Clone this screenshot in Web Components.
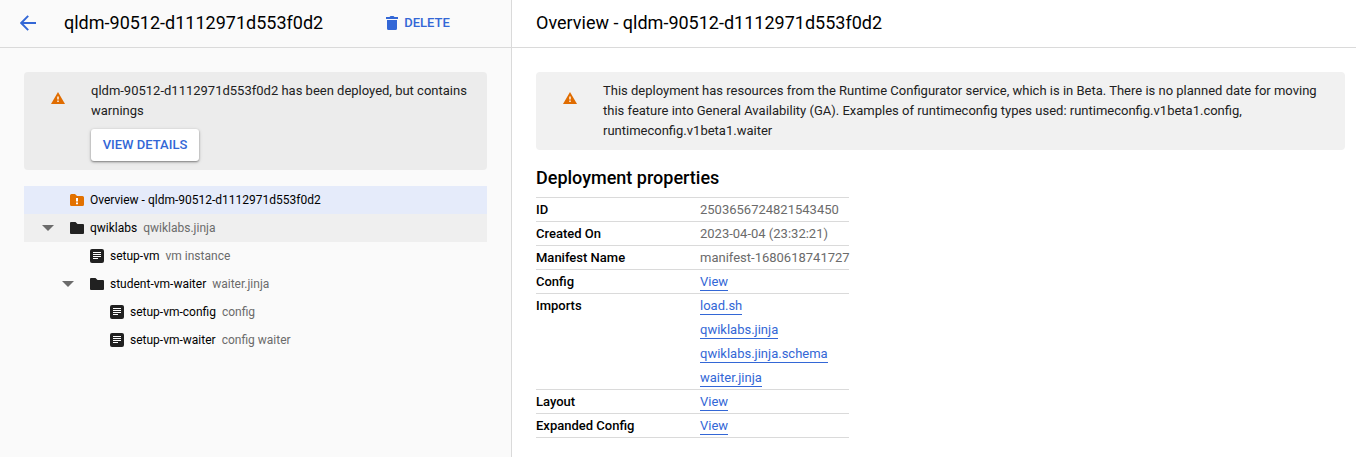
<!DOCTYPE html>
<html lang="en">
<head>
<meta charset="utf-8">
<title>Deployment details</title>
<style>
  html, body { height: 100%; }
  body {
    margin: 0;
    font: 13px/20px Roboto, "Liberation Sans", sans-serif;
    color: #212121;
    background: #fff;
    --link: #3367d6;
    --line: #dadada;
    --muted: #6b6b6b;
    --warn: #e06c00;
  }
</style>
</head>
<body>
<deployment-app></deployment-app>
<script>
const define = (name, html) => {
  const template = document.createElement('template');
  template.innerHTML = html;
  customElements.define(name, class extends HTMLElement {
    constructor() {
      super();
      this.attachShadow({ mode: 'open' }).append(template.content.cloneNode(true));
    }
    connectedCallback() {
      if (name === 'tree-item') setupTreeItem(this);
    }
  });
};

const treeIcons = {
  warning: '<path fill="#e27100" d="M1.500 1H5l2 2h5.500q1.500 0 1.500 1.500v7q0 1.500-1.500 1.500h-11Q0 13 0 11.500v-9Q0 1 1.500 1z"/><path fill="#fff" d="M6 5h2v3.500H6zM6 9.500h2v1.800H6z"/>',
  folder: '<path fill="#212121" d="M1 1h4.500l2 2H13q1 0 1 1v8q0 1-1 1H1q-1 0-1-1V2q0-1 1-1z"/>',
  doc: '<rect width="14" height="14" rx="2" fill="#212121"/><path stroke="#fff" d="M3 3.500h8M3 5.500h8M3 7.500h8M3 9.500h5"/>'
};

function setupTreeItem(el) {
  const root = el.shadowRoot;
  root.querySelector('.icon').innerHTML = treeIcons[el.getAttribute('icon')];
  root.querySelector('.row').style.setProperty('--level', el.getAttribute('level') || 0);
  root.querySelector('button').disabled = !el.hasAttribute('expanded');
}

define('warning-card', `
  <style>
    :host { display: flex; gap: 26px; padding: 9px 20px 9px 27px; border-radius: 4px; background: var(--card, #f1f1f1); }
    svg { width: 14px; height: 12px; flex: none; margin-top: 11px; }
    .body { min-width: 0; }
  </style>
  <svg viewBox="0 0 14 12" aria-hidden="true">
    <path fill="#e06c00" d="M7 0l7 12H0z"/>
    <path fill="#fff" d="M6.300 4.500h1.400v3H6.300zM6.300 8.500h1.400v1.500H6.300z"/>
  </svg>
  <div class="body"><slot></slot></div>
`);

define('raised-button', `
  <style>
    :host { display: block; margin-top: 8px; }
    button { height: 32px; min-width: 108px; padding: 0 11px; border: 0; border-radius: 3px; background: #fff; color: var(--link);
      font: 500 13px/32px Roboto, sans-serif; cursor: pointer; display: block;
      box-shadow: 0 1px 2px rgba(0,0,0,.4), 0 1px 4px rgba(0,0,0,.15); }
  </style>
  <button type="button"><slot></slot></button>
`);

define('pane-header', `
  <style>
    :host { display: flex; align-items: center; height: 45px; padding: 0 0 2px 24px; border-bottom: 1px solid var(--line); }
    h1 { margin: 0; font: 400 18px/24px Roboto, sans-serif; color: #000; white-space: nowrap; }
  </style>
  <slot name="start"></slot>
  <h1><slot></slot></h1>
  <slot name="end"></slot>
`);

define('back-button', `
  <style>
    :host { display: block; margin: 0 28px 0 -4px; }
    button { display: block; width: 16px; height: 16px; padding: 0; border: 0; background: none; cursor: pointer; }
    svg { display: block; }
  </style>
  <button type="button" aria-label="Back">
    <svg width="16" height="16" viewBox="0 0 16 16"><path d="M16 8H1.500M8.200 .8L1.200 8l7 7.200" fill="none" stroke="#3367d6" stroke-width="1.900"/></svg>
  </button>
`);

define('delete-button', `
  <style>
    :host { display: block; margin-left: 63px; }
    button { display: flex; align-items: center; gap: 6px; padding: 0; border: 0; background: none; color: var(--link);
      font: 500 13px/20px Roboto, sans-serif; cursor: pointer; }
  </style>
  <button type="button">
    <svg width="12" height="14" viewBox="0 0 12 14" aria-hidden="true"><path fill="#3367d6" d="M0 1h3.500l1-1h3l1 1H12v2H0zM1 4h10v8.500q0 1.500-1.500 1.500h-7Q1 14 1 12.500z"/></svg>
    <slot></slot>
  </button>
`);

define('tree-item', `
  <style>
    :host { display: block; font-size: 12px; color: #000; }
    :host([selected]) { background: #e5ebfa; }
    :host([shaded]) { background: #efefef; }
    .row { display: flex; align-items: center; height: 28px; padding-left: calc(14px + var(--level) * 20px); white-space: nowrap; }
    button { width: 20px; height: 20px; margin-right: 12px; padding: 0; border: 0; background: none; display: grid; place-items: center; }
    button:disabled { visibility: hidden; }
    .icon { flex: none; margin-right: 6px; }
    .kind { margin-left: 6px; color: var(--muted); }
  </style>
  <div class="row">
    <button type="button" aria-label="Toggle"><svg width="12" height="6" viewBox="0 0 12 6"><path fill="#6b6b6b" d="M0 0h12L6 6z"/></svg></button>
    <svg class="icon" width="14" height="14" viewBox="0 0 14 14" aria-hidden="true"></svg>
    <slot></slot><span class="kind"><slot name="kind"></slot></span>
  </div>
`);

define('deployment-tree', `
  <style>
    :host { display: block; margin-top: 16px; }
  </style>
  <tree-item icon="warning" selected>Overview - qldm-90512-d1112971d553f0d2</tree-item>
  <tree-item icon="folder" expanded shaded>qwiklabs<span slot="kind">qwiklabs.jinja</span></tree-item>
  <tree-item icon="doc" level="1">setup-vm<span slot="kind">vm instance</span></tree-item>
  <tree-item icon="folder" level="1" expanded>student-vm-waiter<span slot="kind">waiter.jinja</span></tree-item>
  <tree-item icon="doc" level="2">setup-vm-config<span slot="kind">config</span></tree-item>
  <tree-item icon="doc" level="2">setup-vm-waiter<span slot="kind">config waiter</span></tree-item>
`);

define('property-table', `
  <style>
    :host { display: block; margin-top: 16px; }
    h2 { margin: 0 0 7px; font: 500 18px/24px Roboto, sans-serif; color: #000; }
    table { border-collapse: collapse; table-layout: fixed; width: 313px; }
    tr { border-top: 1px solid var(--line); }
    tr:last-child { border-bottom: 1px solid var(--line); }
    tr.more { border-top: 0; }
    th, td { padding: 0; height: 23px; line-height: 23px; text-align: left; vertical-align: top; white-space: nowrap; }
    .more td { padding-top: 1px; }
    th { width: 164px; font-weight: 500; color: #000; }
    td { color: var(--muted); }
    a { display: inline-block; line-height: 16px; color: var(--link); text-decoration: none; border-bottom: 1px solid var(--link); }
  </style>
  <h2>Deployment properties</h2>
  <table>
    <tr><th scope="row">ID</th><td>2503656724821543450</td></tr>
    <tr><th scope="row">Created On</th><td>2023-04-04 (23:32:21)</td></tr>
    <tr><th scope="row">Manifest Name</th><td>manifest-1680618741727</td></tr>
    <tr><th scope="row">Config</th><td><a href="#config">View</a></td></tr>
    <tr><th scope="row" rowspan="4">Imports</th><td><a href="#load">load.sh</a></td></tr>
    <tr class="more"><td><a href="#qwiklabs">qwiklabs.jinja</a></td></tr>
    <tr class="more"><td><a href="#schema">qwiklabs.jinja.schema</a></td></tr>
    <tr class="more"><td><a href="#waiter">waiter.jinja</a></td></tr>
    <tr><th scope="row">Layout</th><td><a href="#layout">View</a></td></tr>
    <tr><th scope="row">Expanded Config</th><td><a href="#expanded">View</a></td></tr>
  </table>
`);

define('deployment-app', `
  <style>
    :host { display: grid; grid-template-columns: 512px minmax(0, 1fr); min-height: 100%; }
    nav { background: #fafafa; border-right: 1px solid var(--line); --card: #ececec; }
    .content { padding: 24px 24px 0; }
    main .content { padding-right: 11px; }
  </style>
  <nav>
    <pane-header>
      <back-button slot="start"></back-button>
      qldm-90512-d1112971d553f0d2
      <delete-button slot="end">DELETE</delete-button>
    </pane-header>
    <div class="content">
      <warning-card>qldm-90512-d1112971d553f0d2 has been deployed, but contains warnings<raised-button>VIEW DETAILS</raised-button></warning-card>
      <deployment-tree></deployment-tree>
    </div>
  </nav>
  <main>
    <pane-header>Overview - qldm-90512-d1112971d553f0d2</pane-header>
    <div class="content">
      <warning-card>This deployment has resources from the Runtime Configurator service, which is in Beta. There is no planned date for moving this feature into General Availability (GA). Examples of runtimeconfig types used: runtimeconfig.v1beta1.config, runtimeconfig.v1beta1.waiter</warning-card>
      <property-table></property-table>
    </div>
  </main>
`);
</script>
</body>
</html>
